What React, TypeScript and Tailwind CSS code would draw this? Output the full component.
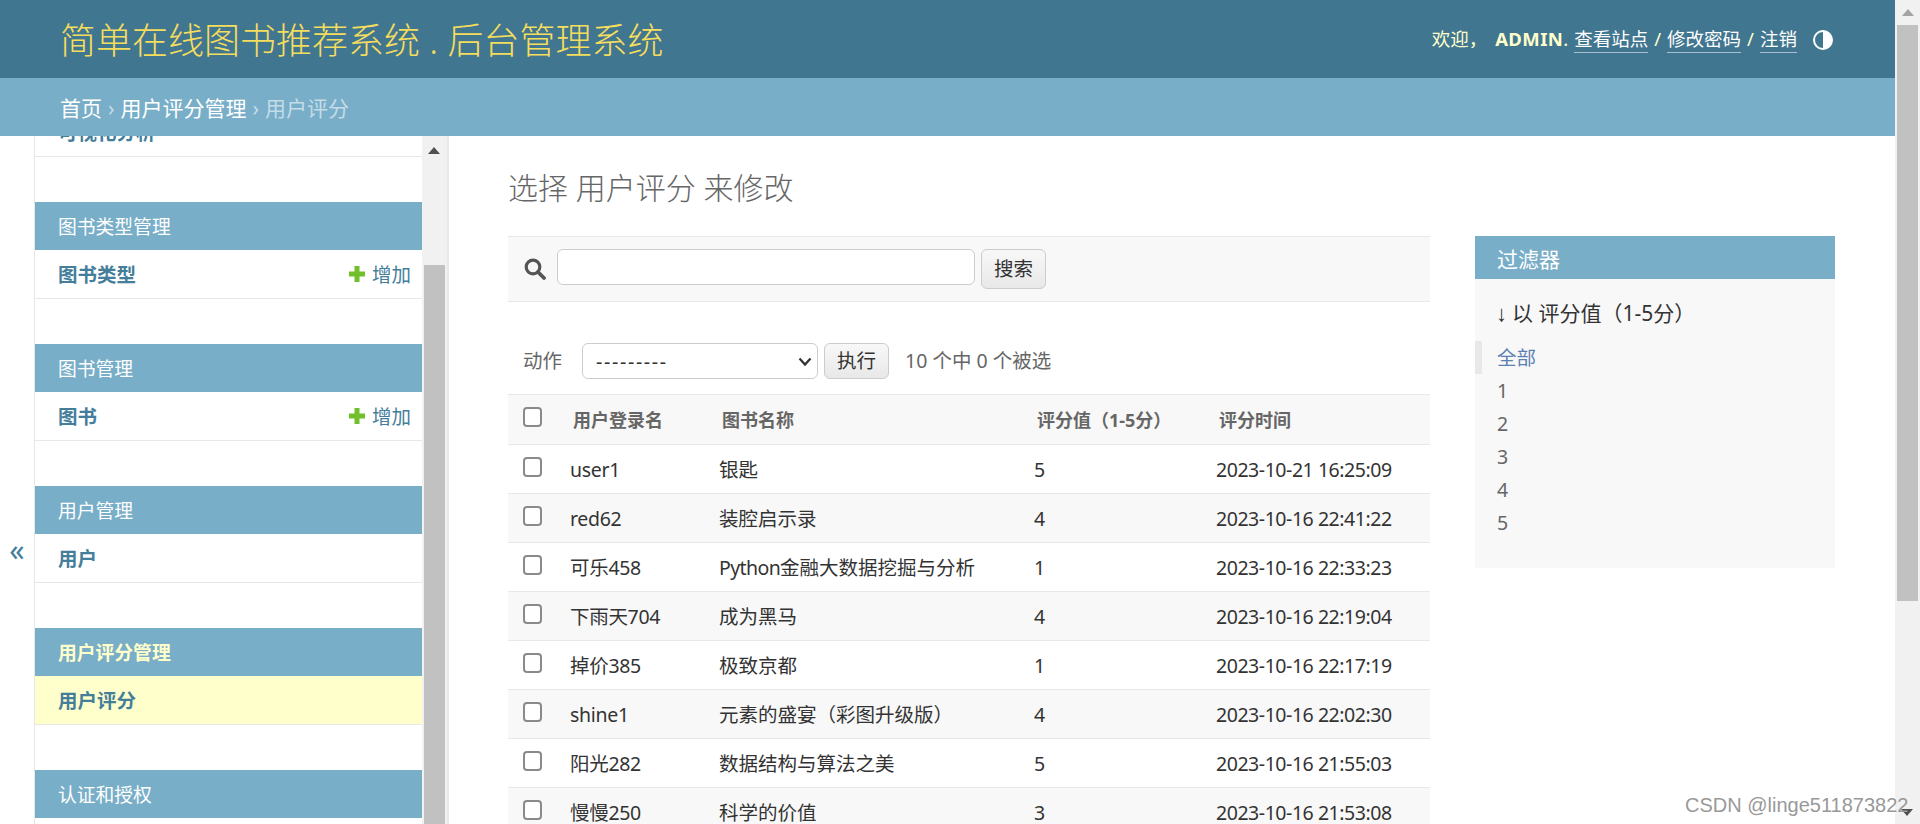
import type { ReactNode } from 'react';

const rows: [string, ReactNode, string, string][] = [
  ['user1', '银匙', '5', '2023-10-21 16:25:09'],
  ['red62', '装腔启示录', '4', '2023-10-16 22:41:22'],
  ['可乐458', <><span className="tracking-[-0.6px]">Python</span>金融大数据挖掘与分析</>, '1', '2023-10-16 22:33:23'],
  ['下雨天704', '成为黑马', '4', '2023-10-16 22:19:04'],
  ['掉价385', '极致京都', '1', '2023-10-16 22:17:19'],
  ['shine1', '元素的盛宴（彩图升级版）', '4', '2023-10-16 22:02:30'],
  ['阳光282', '数据结构与算法之美', '5', '2023-10-16 21:55:03'],
  ['慢慢250', '科学的价值', '3', '2023-10-16 21:53:08'],
];

const modules = [
  { title: '图书类型管理', name: '图书类型', add: true },
  { title: '图书管理', name: '图书', add: true },
  { title: '用户管理', name: '用户', add: false },
  { title: '用户评分管理', name: '用户评分', add: false, current: true },
];

const UpArrow = ({ color }: { color: string }) => (
  <svg width="12" height="7" viewBox="0 0 12 7"><path d="M6 0 12 7H0Z" fill={color} /></svg>
);

const Checkbox = () => (
  <input type="checkbox" className="block appearance-none w-[19px] h-[20px] bg-white border-2 border-[#8a8a8a] rounded-[4px]" />
);

const PlusIcon = () => (
  <svg width="16" height="16" viewBox="0 0 16 16"><path d="M5.5 0h5v5.5H16v5h-5.500V16h-5v-5.500H0v-5h5.500Z" fill="#70bf2b" /></svg>
);

const Sidebar = () => (
  <aside className="flex h-full shrink-0">
    <div className="w-[35px] shrink-0 border-r border-[#e8e8e8] flex items-center justify-center pt-[140px]">
      <span className="text-[30px] leading-none text-[#447e9b]">«</span>
    </div>
    <div className="w-[387px] shrink-0 overflow-hidden">
      <div className="h-[49px] -mt-[28px] mb-[45px] border-b border-[#e8e8e8] pl-[23px] pt-[1px] flex items-center text-[19.500px] font-bold text-[#447e9b]">可视化分析</div>
      {modules.map((m) => (
        <div key={m.title} className="mb-[45px]">
          <div className={`h-[48px] bg-[#79aec8] pl-[23px] pt-[2px] flex items-center text-[18.800px] ${m.current ? 'font-bold text-[#ffc]' : 'text-white'}`}>{m.title}</div>
          <div className={`h-[49px] border-b border-[#e8e8e8] pl-[23px] pr-[11px] pt-[1px] flex items-center justify-between ${m.current ? 'bg-[#ffc]' : ''}`}>
            <span className="text-[19.500px] font-bold text-[#447e9b]">{m.name}</span>
            {m.add && (
              <span className="flex items-center gap-[7px] text-[19.500px] text-[#447e9b]">
                <span className="-mt-[2px]"><PlusIcon /></span>增加
              </span>
            )}
          </div>
        </div>
      ))}
      <div className="h-[48px] bg-[#79aec8] pl-[23px] pt-[2px] flex items-center text-[18.800px] text-white">认证和授权</div>
    </div>
    <div className="w-[25px] shrink-0 bg-[#f1f1f1] pl-[2px] flex flex-col">
      <div className="h-[129px] shrink-0 flex justify-center pt-[11px] pr-[4px]"><UpArrow color="#505050" /></div>
      <div className="w-[21px] flex-1 bg-[#c1c1c1]" />
    </div>
    <div className="w-[2px] shrink-0 bg-[#e8e8e8]" />
  </aside>
);

const Toolbar = () => (
  <div className="h-[66px] bg-[#f8f8f8] border-y border-[#e8e8e8] flex items-start pt-[12px] pl-[16px]">
    <svg width="22" height="22" viewBox="0 0 22 22" className="mt-[9px]">
      <circle cx="9" cy="9" r="6.800" fill="none" stroke="#555" strokeWidth="3.200" />
      <path d="M14 14l6 6" stroke="#555" strokeWidth="3.800" strokeLinecap="round" />
    </svg>
    <input className="ml-[11px] w-[418px] h-[36px] bg-white border border-[#ccc] rounded-[6px]" />
    <button className="ml-[6px] w-[65px] h-[40px] border border-[#ccc] rounded-[6px] bg-linear-to-b from-[#f8f8f8] to-[#e8e8e8] text-[19.500px] text-[#333]">搜索</button>
  </div>
);

const Actions = () => (
  <div className="h-[92px] pt-[41px] pl-[15px] flex items-start">
    <span className="w-[59px] h-[36px] flex items-center text-[19.500px] text-[#666]">动作</span>
    <div className="relative w-[236px] h-[36px]">
      <select className="w-full h-full appearance-none bg-white border border-[#ccc] rounded-[6px] pl-[13px] pt-[2px] tracking-[1.700px] text-[19.500px] text-[#333]">
        <option>---------</option>
      </select>
      <svg width="14" height="10" viewBox="0 0 14 10" className="absolute right-[6px] top-[14px]"><path d="M1.500 1.500 7 7.500l5.500-6" fill="none" stroke="#333" strokeWidth="2.200" /></svg>
    </div>
    <button className="ml-[6px] w-[65px] h-[36px] border border-[#ccc] rounded-[6px] bg-linear-to-b from-[#f8f8f8] to-[#e8e8e8] text-[19.500px] text-[#333]">执行</button>
    <span className="ml-[16px] h-[36px] flex items-center text-[19.500px] text-[#666]">10 个中 0 个被选</span>
  </div>
);

const ResultTable = () => (
  <table className="w-full table-fixed">
    <colgroup>
      <col className="w-[54px]" />
      <col className="w-[149px]" />
      <col className="w-[315px]" />
      <col className="w-[183px]" />
      <col />
    </colgroup>
    <thead>
      <tr className="h-[50px] bg-[#f8f8f8] border-y border-[#e8e8e8] text-[18px] font-bold text-[#666] text-left">
        <th className="pl-[15px] align-top pt-[12px]"><Checkbox /></th>
        <th className="pl-[11px] pt-[2px]">用户登录名</th>
        <th className="pl-[11px] pt-[2px]">图书名称</th>
        <th className="pl-[11px] pt-[2px]">评分值（1-5分）</th>
        <th className="pl-[10px] pt-[2px]">评分时间</th>
      </tr>
    </thead>
    <tbody>
      {rows.map((r, i) => (
        <tr key={r[0]} className={`h-[49px] border-b border-[#e8e8e8] text-[19.500px] text-[#333] ${i % 2 ? 'bg-[#f8f8f8]' : 'bg-white'}`}>
          <td className="pl-[15px] align-top pt-[12px]"><Checkbox /></td>
          <td className="pl-[8px] pt-[2px] tracking-[-0.3px]">{r[0]}</td>
          <td className="pl-[8px] pt-[2px] whitespace-nowrap">{r[1]}</td>
          <td className="pl-[8px] pt-[2px]">{r[2]}</td>
          <td className="pl-[7px] pt-[2px] whitespace-nowrap tracking-[-0.45px]">{r[3]}</td>
        </tr>
      ))}
    </tbody>
  </table>
);

const FilterPanel = () => (
  <div className="w-[360px] h-[332px] shrink-0 bg-[#f8f8f8]">
    <div className="h-[43px] bg-[#79aec8] pl-[22px] pt-[4px] flex items-center text-[21px] text-white">过滤器</div>
    <div className="h-[33px] mt-[18px] mb-[11px] pl-[22px] flex items-center text-[21px] text-[#333]">
      <span className="-ml-[1px] w-[16px] shrink-0 text-[22px] [font-family:'Liberation_Sans',sans-serif]">↓</span>以 评分值（1-5分）
    </div>
    <div className="h-[33px] pl-[15px] flex items-center text-[19.500px] text-[#5b80b2] border-l-[7px] border-[#e8e8e8]">全部</div>
    {['1', '2', '3', '4', '5'].map((n) => (
      <div key={n} className="h-[33px] pl-[22px] flex items-center text-[19.500px] text-[#666]">{n}</div>
    ))}
  </div>
);

const App = () => {
  return (
    <div className="relative flex w-full h-screen overflow-hidden bg-white [font-family:'Noto_Sans','Noto_Sans_CJK_SC',sans-serif]">
      <div className="flex-1 min-w-0 flex flex-col">
        <header className="h-[78px] shrink-0 bg-[#417690] pl-[60px] pr-[62px] flex items-center justify-between">
          <h1 className="pt-[4px] text-[36px] leading-none font-light text-[#f5dd5d] whitespace-nowrap">简单在线图书推荐系统 . 后台管理系统</h1>
          <div className="flex items-center text-[18.500px] text-[#ffc] whitespace-nowrap">
            <span>欢迎，</span>
            <strong className="ml-[8px] font-bold tracking-[0.4px]">ADMIN</strong>
            <span>.</span>
            <a className="ml-[6px] text-white border-b border-[#a9c1cc] leading-[26px]">查看站点</a>
            <span className="mx-[6px]">/</span>
            <a className="text-white border-b border-[#a9c1cc] leading-[26px]">修改密码</a>
            <span className="mx-[6px]">/</span>
            <a className="text-white border-b border-[#a9c1cc] leading-[26px]">注销</a>
            <svg width="20" height="20" viewBox="0 0 20 20" className="ml-[16px] mt-[2px]">
              <circle cx="10" cy="10" r="9" fill="#417690" stroke="#fff" strokeWidth="2" />
              <path d="M10 1a9 9 0 0 1 0 18Z" fill="#fff" />
            </svg>
          </div>
        </header>
        <nav className="h-[58px] shrink-0 bg-[#79aec8] pl-[60px] pt-[4px] flex items-center text-[21px] text-white whitespace-nowrap">
          <a>首页</a>
          <span className="mx-[6px] text-[#c4dce8]">›</span>
          <a>用户评分管理</a>
          <span className="mx-[6px] text-[#c4dce8]">›</span>
          <span className="text-[#c4dce8]">用户评分</span>
        </nav>
        <div className="flex flex-1 min-h-0">
          <Sidebar />
          <main className="flex-1 min-w-0 overflow-hidden pl-[59px] pr-[60px] pt-[29px]">
            <h2 className="h-[45px] mb-[26px] text-[30px] leading-[45px] font-light text-[#666]">选择 用户评分 来修改</h2>
            <div className="flex gap-[45px]">
              <div className="flex-1 min-w-0">
                <Toolbar />
                <Actions />
                <ResultTable />
              </div>
              <FilterPanel />
            </div>
          </main>
        </div>
      </div>
      <div className="w-[25px] shrink-0 bg-[#f1f1f1] flex flex-col pl-[2px] pr-[2px]">
        <div className="h-[25px] shrink-0 flex justify-center items-center"><UpArrow color="#a3a3a3" /></div>
        <div className="h-[576px] shrink-0 bg-[#c1c1c1]" />
        <div className="mt-auto h-[25px] flex justify-center items-center rotate-180 pb-[2px]"><UpArrow color="#505050" /></div>
      </div>
      <span className="absolute left-[1685px] top-[792px] text-[20px] leading-[26px] text-[#999] [font-family:'Liberation_Sans',sans-serif] whitespace-nowrap">CSDN @linge511873822</span>
    </div>
  );
};

export default App;
